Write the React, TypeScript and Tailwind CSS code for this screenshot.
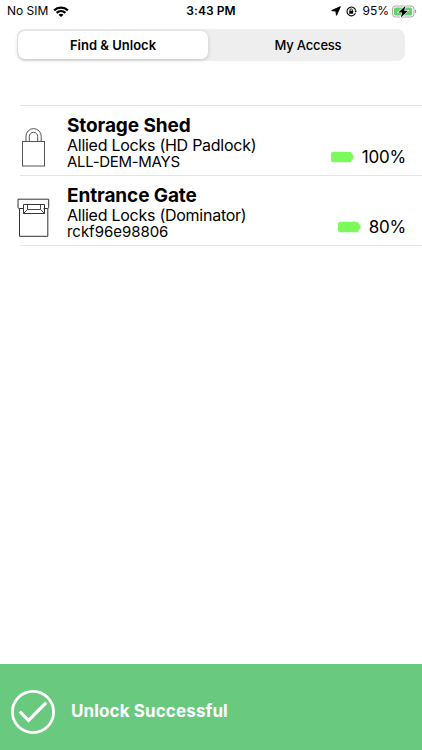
import React from "react";

function WifiIcon() {
  return (
    <svg className="h-[11px] w-[16px]" viewBox="0 0 16 11" fill="none">
      <path d="M1.1 4.3C4.900.700 11.100.700 14.900 4.300" stroke="#000" strokeWidth="2.300" />
      <path d="M3.600 6.900C6.200 4.500 9.800 4.500 12.400 6.900" stroke="#000" strokeWidth="2.200" />
      <path d="M5.500 8.700C7 7.300 9 7.300 10.500 8.700L8 11Z" fill="#000" />
    </svg>
  );
}

function StatusBar() {
  return (
    <header className="grid h-[22px] grid-cols-[1fr_auto_1fr] items-center text-[12px] leading-[22px]">
      <div className="flex items-center gap-[5px] pl-[7px]">
        <span>No SIM</span>
        <WifiIcon />
      </div>
      <span className="font-semibold tracking-[0.05px]">3:43 PM</span>
      <div className="flex items-center justify-end pr-[5px]">
        <svg className="mr-[5px] h-[10px] w-[10px]" viewBox="0 0 10 10">
          <path d="M9.300.700 5.500 9.300 4.900 5.100.700 4.600Z" fill="#000" stroke="#000" strokeWidth="1" strokeLinejoin="round" />
        </svg>
        <svg className="mr-[5px] h-[11px] w-[11px]" viewBox="0 0 11 11" fill="none">
          <path d="M9.400 7.300A4.400 4.400 0 1 1 9.700 4.500" stroke="#000" strokeWidth="1.100" />
          <path d="M8.300 4.800H11L9.700 6.800Z" fill="#000" />
          <rect x="3.200" y="4.800" width="4" height="3" rx=".4" fill="#000" />
          <path d="M4 5V4a1.200 1.200 0 0 1 2.400 0v1" stroke="#000" strokeWidth=".8" />
        </svg>
        <span className="mr-[3px]">95%</span>
        <svg className="h-[13px] w-[25px]" viewBox="0 0 25 13" fill="none">
          <rect x=".5" y="1" width="21.500" height="11" rx="3" stroke="#aaa" />
          <rect x="2" y="2.500" width="18" height="8" rx="1.500" fill="#65d16d" />
          <path d="M23.200 4.600c1.400.5 1.400 3.300 0 3.800Z" fill="#888" />
          <path d="M13.500.800 6.300 7.400h3.900L8.800 12.400 16 5.700h-3.900Z" fill="#000" stroke="#fff" strokeWidth="1.200" paintOrder="stroke" />
        </svg>
      </div>
    </header>
  );
}

function PadlockIcon() {
  return (
    <svg className="h-[40px] w-[32px]" viewBox="0 0 32 40" fill="none" stroke="#555" strokeWidth="1">
      <rect x="5.500" y="14.500" width="22" height="24.500" />
      <path d="M9 14.500V9.200a7.600 7.600 0 0 1 15.200 0v5.300" />
      <path d="M12.300 14.500V9.500a4.200 4.200 0 0 1 8.400 0v5" />
    </svg>
  );
}

function DominatorIcon() {
  return (
    <svg className="h-[41px] w-[33px]" viewBox="0 0 33 41" fill="none" stroke="#333" strokeWidth="1">
      <path d="M2.500 11.500V39.300H30.800V11.500" />
      <path d="M6 11.500H2.200Q1 11.500 1 10.300V2.200H31.700V10.300Q31.700 11.500 30.500 11.500H26.500" />
      <path d="M6.500 7.500H27.500V16.500H6.500Z" />
      <path d="M10.500 7.500V12.500H23.500V7.500M6.500 16.500L10.500 12.500M27.500 16.500L23.500 12.500" strokeWidth=".9" />
    </svg>
  );
}

interface LockProps {
  icon: React.ReactNode;
  name: string;
  model: string;
  id: string;
  charge: string;
  idClass: string;
}

function LockRow({ icon, name, model, id, charge, idClass }: LockProps) {
  return (
    <li className="ml-5 flex h-[70px] border-b border-[#e4e4e4]">
      <div className="-ml-[3px] w-[50px] shrink-0 pt-[21px]">{icon}</div>
      <div className="grow whitespace-nowrap pt-[8px]">
        <h2 className="text-[19px] font-bold leading-[23px] tracking-[-0.1px]">{name}</h2>
        <p className="text-[16px] leading-[17px] tracking-[-0.26px]">{model}</p>
        <p className={`text-[15px] leading-[16px] ${idClass}`}>{id}</p>
      </div>
      <div className="mb-[7px] flex h-[22px] items-center self-end pr-4">
        <svg className="mr-[8px] h-[12px] w-[23px]" viewBox="0 0 23 12" fill="#7cf95b">
          <rect x="0" y=".7" width="20.800" height="10.500" rx="2.200" />
          <rect x="18" y="3.300" width="4.500" height="5.300" rx="1.500" />
        </svg>
        <span className="text-[17px] leading-[22px] tracking-[-0.2px]">{charge}</span>
      </div>
    </li>
  );
}

export default function App() {
  return (
    <main className="flex h-[750px] w-[422px] flex-col overflow-hidden bg-white font-['Inter','Liberation_Sans',sans-serif] text-black">
      <StatusBar />
      <nav className="ml-[17px] mt-[7px] flex h-[32px] w-[388px] rounded-[8px] bg-[#eeeeef] py-[2px] pl-[1px] pr-[2px] text-[13px]">
        <button className="w-[190px] rounded-[7px] bg-white pt-[1px] font-semibold shadow-[0_1px_4px_rgba(0,0,0,0.18)]">Find &amp; Unlock</button>
        <button className="grow pl-[5px] pt-[1px] font-medium tracking-[-0.2px]">My Access</button>
      </nav>
      <ul className="mt-[44px]">
        <li className="ml-5 h-px bg-[#e4e4e4]" />
        <LockRow icon={<PadlockIcon />} name="Storage Shed" model="Allied Locks (HD Padlock)" id="ALL-DEM-MAYS" charge="100%" idClass="tracking-[-0.3px]" />
        <LockRow icon={<DominatorIcon />} name="Entrance Gate" model="Allied Locks (Dominator)" id="rckf96e98806" charge="80%" idClass="tracking-[-0.03px]" />
      </ul>
      <footer className="mt-auto flex h-[86px] items-center gap-[15px] bg-[#69c97f] pl-[10px] pt-[9px] text-white">
        <svg className="h-[46px] w-[46px]" viewBox="0 0 46 46" fill="none" stroke="#fff" strokeWidth="2.800">
          <circle cx="23" cy="23" r="20.600" />
          <path d="M9.800 22.500 18.500 31.500 36.200 13.700" strokeWidth="3.200" />
        </svg>
        <span className="text-[17px] font-bold tracking-[0.12px]">Unlock Successful</span>
      </footer>
    </main>
  );
}
